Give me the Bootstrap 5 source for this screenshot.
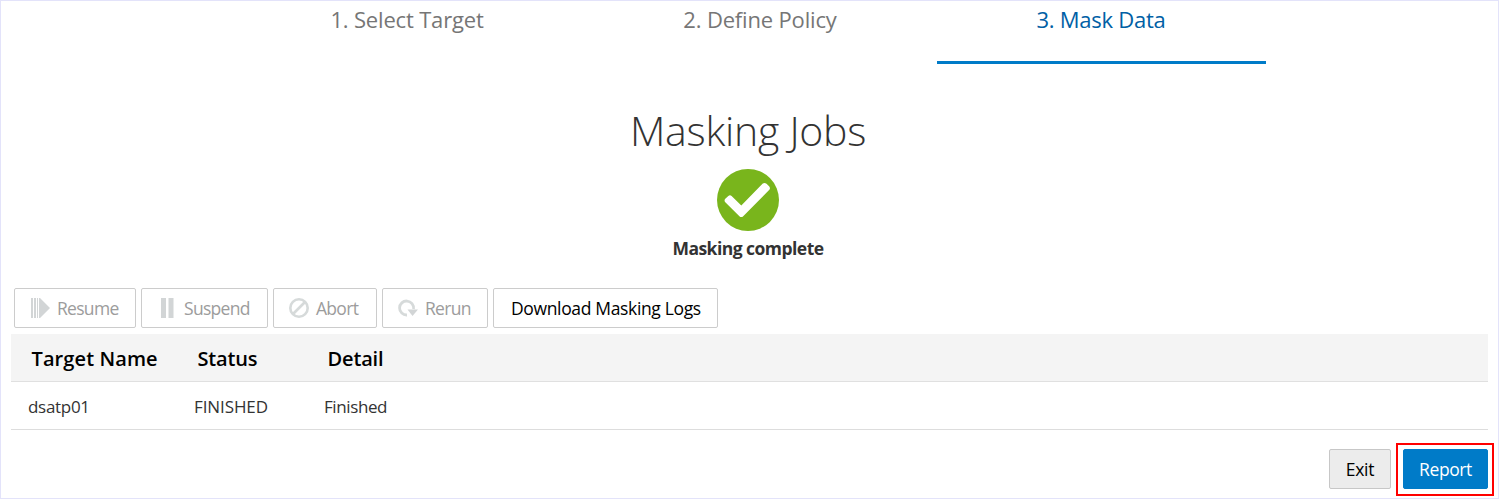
<!DOCTYPE html>
<html lang="en">
<head>
<meta charset="utf-8">
<title>Masking Jobs</title>
<link href="https://cdn.jsdelivr.net/npm/bootstrap@5.3.0/dist/css/bootstrap.min.css" rel="stylesheet">
<style>
body{font-family:"Open Sans","Noto Sans",sans-serif;font-size:17.5px;line-height:24px;color:#333;background:#fff;height:499px;overflow:hidden}
.page{height:499px;border:1px solid #e3e3fa;padding:0 10px;white-space:nowrap}
.steps{height:63px;padding-right:3px}
.steps .nav-link{width:353px;padding:3px 0 0;font-size:22px;line-height:30px;color:#767676;border-bottom:3px solid transparent;border-radius:0;text-align:center;letter-spacing:-.17px}
.steps .nav-link.active{width:329px;color:#0060a5;border-color:#007bc8;letter-spacing:-.25px}
.result{padding-right:3px}
.heading{font-size:41px;line-height:60px;font-weight:340;margin:36px 0 9px;letter-spacing:-.25px}
.done{font-weight:700;line-height:24px;margin:5px 0 1px;letter-spacing:-.53px}
.btn{--bs-btn-font-size:17.5px;--bs-btn-line-height:24px;--bs-btn-border-radius:2px;--bs-btn-padding-x:0;--bs-btn-padding-y:0;height:40px;display:flex;align-items:center;letter-spacing:-.3px}
.tool{border-color:#ccc!important;color:#000;background:#fff;padding-left:14px}
.tool:disabled{color:#9c9c9c;opacity:1;letter-spacing:-.7px}
.tool svg{margin-right:6px;flex:none}
.logs{padding-left:17px;letter-spacing:-.35px}
.tools{margin:27px 0 6px 3px;gap:5px}
.jobs{table-layout:fixed;border-collapse:separate;border-spacing:0;margin:0;color:#333}
.jobs th{height:48px;background:#f4f4f4;border-bottom:1px solid #e0e0e0;padding:2px 0 0 20.500px;font-size:20px;font-weight:600;color:#000;vertical-align:middle;letter-spacing:-.15px}
.jobs th:first-child{letter-spacing:.1px}
.jobs td{height:48px;border-bottom:1px solid #ddd;padding:3px 0 0 17px;font-size:17px;vertical-align:middle;letter-spacing:-.3px}
.jobs td:nth-child(2){letter-spacing:-.1px}
.jobs td:nth-child(3){letter-spacing:-.4px}
.exit{width:62px;justify-content:center;background:#ececec;border-color:#c7c7c7;color:#000;margin:6px 5px 0 0}
.actions{margin:13px -6px 0 0}
.callout{border:2px solid red;padding:4px 4px 5px 5px;width:98px;height:53px}
.report{width:85px;justify-content:center;background:#007bc8;color:#fff;border-color:#007bc8;letter-spacing:-.4px}
</style>
</head>
<body>
<main class="page d-flex flex-column">
<nav class="nav steps justify-content-center flex-nowrap">
<a class="nav-link">1. Select Target</a>
<a class="nav-link">2. Define Policy</a>
<a class="nav-link active">3. Mask Data</a>
</nav>
<section class="result text-center d-flex flex-column align-items-center">
<h1 class="heading">Masking Jobs</h1>
<svg width="62" height="62" viewBox="0 0 62 62"><circle cx="31" cy="31" r="31" fill="#79b51c"/><path d="M8.300 29.700l3-2.700q1.700-1.300 3.300 0l9.700 9.400 21.200-21.700q2-1.500 4 0l2.600 2.600q1.700 1.900 0 3.700L26.200 47.200q-1.900 1.700-3.800 0L8.300 33.200q-1.500-1.800 0-3.500z" fill="#fff"/></svg>
<div class="done">Masking complete</div>
</section>
<div class="d-flex tools">
<button class="btn tool" disabled style="width:122px"><svg width="22" height="20" viewBox="0 0 22 20"><path d="M2 0h2v20H2zM5 0h2v20H5zM8 0h1v20H8zM10 0h1l10 10-10 10h-1z" fill="#d2d5d6"/></svg>Resume</button>
<button class="btn tool" disabled style="width:127px"><svg width="22" height="20" viewBox="0 0 22 20"><path d="M5 0h5v20H5zM12.500 0h5v20h-5z" fill="#d2d5d6"/></svg>Suspend</button>
<button class="btn tool" disabled style="width:104px"><svg width="22" height="20" viewBox="0 0 22 20"><g fill="none" stroke="#d6dada" stroke-width="2.600"><circle cx="11" cy="10" r="8.700"/><path d="M5 16L17 4"/></g></svg>Abort</button>
<button class="btn tool" disabled style="width:106px"><svg width="22" height="20" viewBox="0 0 22 20"><path d="M10 17A7 7 0 1 1 16.500 11" fill="none" stroke="#d6dada" stroke-width="2.800"/><path d="M10.500 11.500H21L15.500 18z" fill="#d2d5d6"/></svg>Rerun</button>
<button class="btn tool logs" style="width:225px">Download Masking Logs</button>
</div>
<table class="table jobs">
<colgroup><col style="width:166px"><col style="width:130px"><col></colgroup>
<thead><tr><th>Target Name</th><th>Status</th><th>Detail</th></tr></thead>
<tbody><tr><td>dsatp01</td><td>FINISHED</td><td>Finished</td></tr></tbody>
</table>
<div class="d-flex actions justify-content-end">
<button class="btn exit">Exit</button>
<div class="callout"><button class="btn report">Report</button></div>
</div>
</main>
<script src="https://cdn.jsdelivr.net/npm/bootstrap@5.3.0/dist/js/bootstrap.bundle.min.js"></script>
</body>
</html>
